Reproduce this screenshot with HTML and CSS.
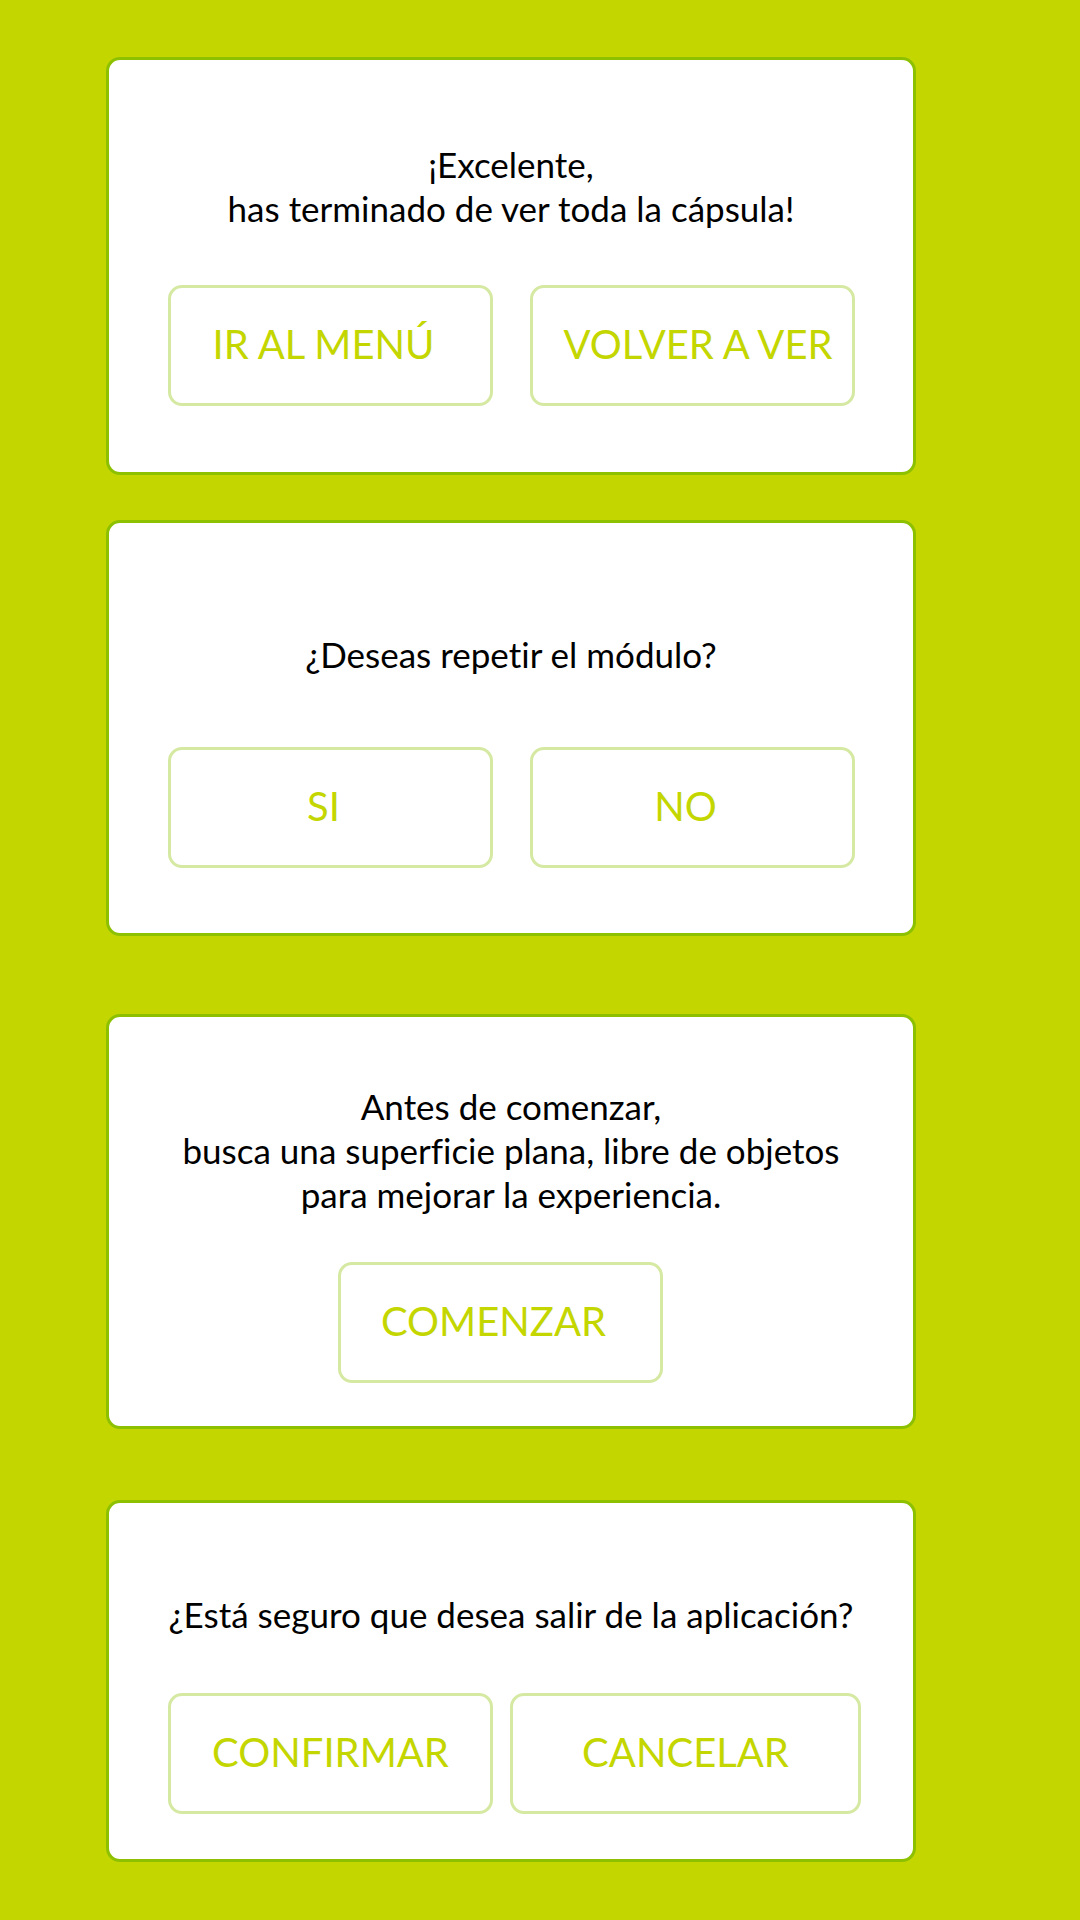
FILE: index.html
```html
<!DOCTYPE html>
<html lang="es">
<head>
<meta charset="utf-8">
<title>Diálogos</title>
<link rel="stylesheet" href="styles.css">
</head>
<body>
<main class="stack">
  <section class="card card--finish">
    <p class="msg">¡Excelente,<br>has terminado de ver toda la cápsula!</p>
    <div class="actions">
      <button class="btn">IR AL MENÚ</button>
      <button class="btn btn--shift-right">VOLVER A VER</button>
    </div>
  </section>

  <section class="card card--repeat">
    <p class="msg">¿Deseas repetir el módulo?</p>
    <div class="actions">
      <button class="btn">SI</button>
      <button class="btn">NO</button>
    </div>
  </section>

  <section class="card card--start">
    <p class="msg">Antes de comenzar,<br>busca una superficie plana, libre de objetos<br>para mejorar la experiencia.</p>
    <div class="actions actions--single">
      <button class="btn">COMENZAR</button>
    </div>
  </section>

  <section class="card card--exit">
    <p class="msg">¿Está seguro que desea salir de la aplicación?</p>
    <div class="actions actions--tight">
      <button class="btn btn--centered">CONFIRMAR</button>
      <button class="btn btn--wide btn--centered">CANCELAR</button>
    </div>
  </section>
</main>
</body>
</html>
```

FILE: styles.css
```css
* { box-sizing: border-box; }

html, body {
  margin: 0;
  padding: 0;
}

body {
  background: #c4d600;
  width: 1080px;
  min-height: 1920px;
  font-family: Lato, "Open Sans", "Liberation Sans", sans-serif;
}

.stack {
  display: flex;
  flex-direction: column;
  padding: 57px 0 0 106px;
}

.card {
  width: 810px;
  background: #ffffff;
  border: 3px solid #8dc100;
  border-radius: 14px;
  display: flex;
  flex-direction: column;
  align-items: center;
}

.card--finish { height: 418px; padding-top: 82px; gap: 55px; }
.card--repeat { height: 416px; margin-top: 45px; padding-top: 109px; gap: 71px; }
.card--start  { height: 415px; margin-top: 78px; padding-top: 67px; gap: 46px; }
.card--exit   { height: 362px; margin-top: 71px; padding-top: 89px; gap: 57px; }

.msg {
  margin: 0;
  font-size: 35px;
  line-height: 44px;
  color: #000000;
  text-align: center;
  font-variant-ligatures: no-common-ligatures;
}

.actions {
  display: flex;
  gap: 37px;
  align-self: stretch;
  padding-left: 59px;
}

.actions--single {
  padding-left: 229px;
}

.actions--tight {
  gap: 17px;
}

.btn {
  width: 325px;
  height: 121px;
  background: #ffffff;
  border: 3px solid #d6e9a3;
  border-radius: 14px;
  color: #c4d600;
  font-family: Lato, "Open Sans", "Liberation Sans", sans-serif;
  font-size: 40px;
  font-weight: 400;
  padding: 0 14px 4px 0;
  display: flex;
  align-items: center;
  justify-content: center;
  white-space: nowrap;
}

.btn--shift-right { padding: 0 0 4px 11px; }
.btn--centered { padding: 0 0 4px 0; }
.btn--wide { width: 351px; }
```
